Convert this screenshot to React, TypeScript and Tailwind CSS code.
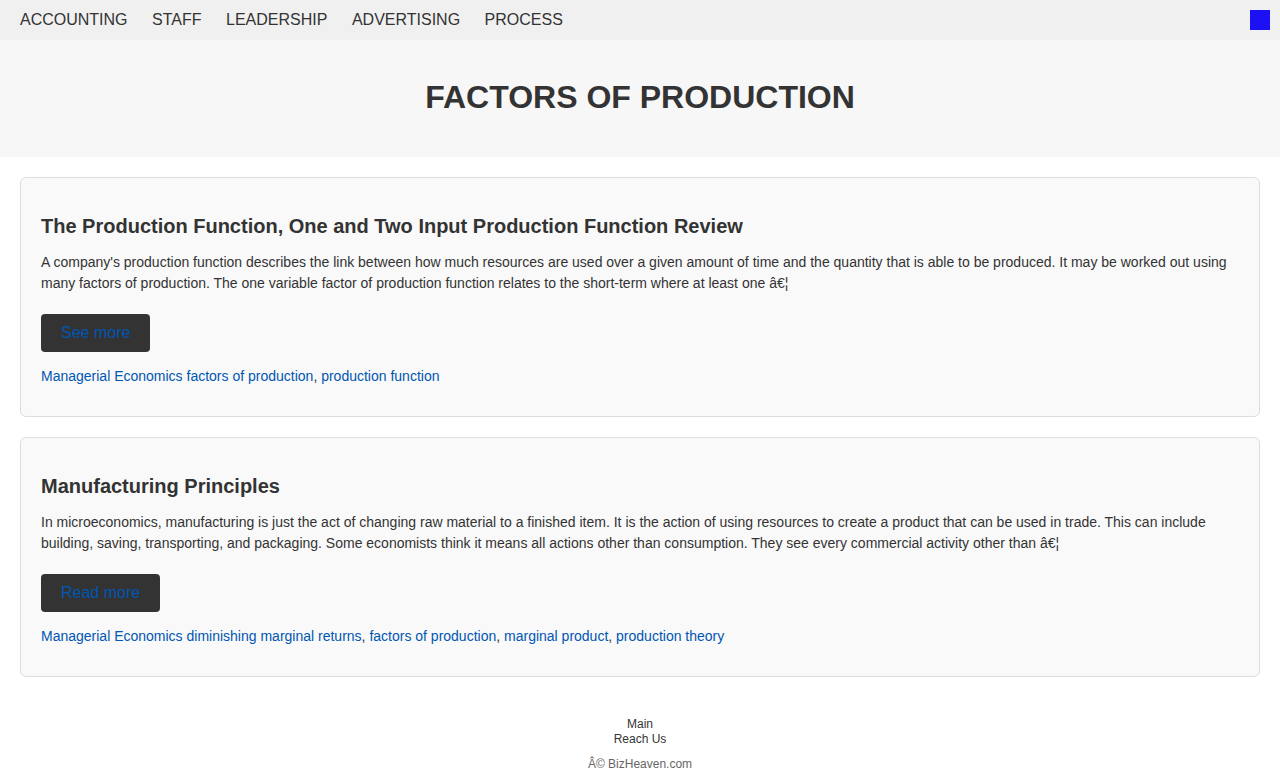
const navItems = ['ACCOUNTING', 'STAFF', 'LEADERSHIP', 'ADVERTISING', 'PROCESS'];

interface Article {
  title: string;
  summary: string;
  button: string;
  tags: string[];
}

const articles: Article[] = [
  {
    title: 'The Production Function, One and Two Input Production Function Review',
    summary:
      "A company's production function describes the link between how much resources are used over a given amount of time and the quantity that is able to be produced. It may be worked out using many factors of production. The one variable factor of production function relates to the short-term where at least one â€¦",
    button: 'See more',
    tags: ['factors of production', 'production function'],
  },
  {
    title: 'Manufacturing Principles',
    summary:
      'In microeconomics, manufacturing is just the act of changing raw material to a finished item. It is the action of using resources to create a product that can be used in trade. This can include building, saving, transporting, and packaging. Some economists think it means all actions other than consumption. They see every commercial activity other than â€¦',
    button: 'Read more',
    tags: ['diminishing marginal returns', 'factors of production', 'marginal product', 'production theory'],
  },
];

function ArticleCard({ article }: { article: Article }) {
  return (
    <article className="rounded-md border border-[#ddd] bg-[#f9f9f9] px-5 pt-5 pb-[29px]">
      <h2 className="mt-4 text-[20px] leading-6 font-bold text-[#333]">{article.title}</h2>
      <p className="mt-[14px] text-[14px] leading-[21px] text-[#333]">{article.summary}</p>
      <a
        href="#"
        className="mt-5 block w-fit rounded bg-[#333] px-5 py-[7px] text-[16px] leading-6 text-[#0056b3]"
      >
        {article.button}
      </a>
      <div className="mt-[14px] text-[14px] leading-[21px] text-[#333]">
        <a href="#" className="text-[#0056b3]">Managerial Economics</a>{' '}
        {article.tags.map((tag, i) => (
          <span key={tag}>
            <a href="#" className="text-[#0056b3]">{tag}</a>
            {i < article.tags.length - 1 && ', '}
          </span>
        ))}
      </div>
    </article>
  );
}

export default function App() {
  return (
    <div className="min-h-[772px] bg-white font-['Liberation_Sans',Arial,sans-serif] text-[#333]">
      <nav className="flex h-10 items-center justify-between bg-[#f0f0f0] px-5">
        <ul className="flex gap-[24.5px]">
          {navItems.map((item) => (
            <li key={item}>
              <a href="#" className="text-[16px] leading-5 text-[#333]">{item}</a>
            </li>
          ))}
        </ul>
        <div className="-mr-[10px] h-5 w-5 bg-[#1c10f5]" />
      </nav>

      <header className="bg-[#f7f7f7] pt-[39px] pb-[41px] text-center">
        <h1 className="text-[32px] leading-[37px] font-bold text-[#333]">FACTORS OF PRODUCTION</h1>
      </header>

      <main className="flex flex-col gap-5 px-5 pt-5">
        {articles.map((a) => (
          <ArticleCard key={a.title} article={a} />
        ))}
      </main>

      <footer className="mt-[40px] pb-1 text-center text-[12px] leading-[15px]">
        <div className="text-[#333]">
          <a href="#" className="block">Main</a>
          <a href="#" className="block">Reach Us</a>
        </div>
        <p className="mt-[10px] text-[#666]">Â© BizHeaven.com</p>
      </footer>
    </div>
  );
}
